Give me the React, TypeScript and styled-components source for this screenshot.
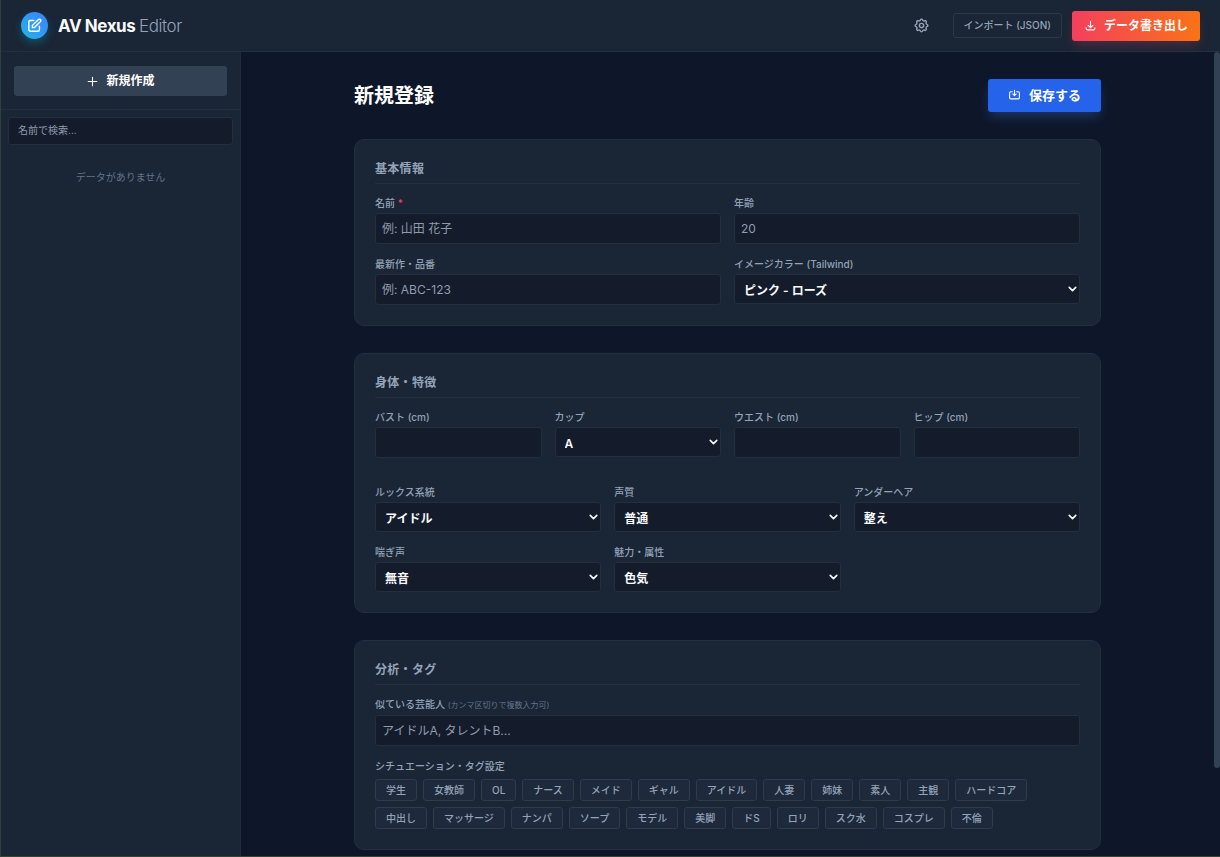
import React from "react";
import styled, { createGlobalStyle, css } from "styled-components";
import { HiOutlineCog } from "react-icons/hi";

const GlobalStyle = createGlobalStyle`
  *, *::before, *::after { box-sizing: border-box; }
  body {
    margin: 0;
    background: #0e172a;
    color: #e2e8f0;
    font-family: Inter, "Noto Sans CJK JP", sans-serif;
    font-size: 13px;
  }
  button, input, select { font: inherit; color: inherit; }
`;

const Shell = styled.div`
  display: flex;
  flex-direction: column;
  height: 100vh;
  overflow: hidden;
  border-left: 1px solid #2e4040;
  border-bottom: 1px solid #37452f;
`;

const Header = styled.header`
  display: flex;
  align-items: center;
  justify-content: space-between;
  flex: none;
  height: 52px;
  padding: 0 20px;
  background: #1a2535;
  border-bottom: 1px solid #222f3f;
`;

const Brand = styled.div`
  display: flex;
  align-items: center;
  gap: 10px;
`;

const Logo = styled.span`
  display: grid;
  place-items: center;
  width: 27px;
  height: 27px;
  border-radius: 50%;
  background: linear-gradient(45deg, #22b3ee, #3b82f6);
  box-shadow: 0 4px 10px rgba(6, 182, 212, 0.3);
  color: #fff;
`;

const BrandName = styled.h1`
  margin: 0;
  font-size: 17px;
  line-height: 24px;
  font-weight: 700;
  letter-spacing: -0.025em;
  color: #f8fafc;
  span { font-weight: 300; color: #94a3b8; }
`;

const Actions = styled.div`
  display: flex;
  align-items: center;
  gap: 10px;
`;

const IconButton = styled.button`
  display: grid;
  place-items: center;
  width: 30px;
  height: 30px;
  margin-right: 6px;
  padding: 0;
  border: 0;
  background: none;
  color: #94a3b8;
`;

const OutlineButton = styled.button`
  height: 25px;
  padding: 0 10px 2px;
  border: 1px solid #2b384a;
  border-radius: 3px;
  background: none;
  color: #94a3b8;
  font-size: 10px;
  line-height: 14px;
  font-weight: 500;
`;

const SolidButton = styled.button<{ $tone: "export" | "save" | "new" }>`
  display: flex;
  align-items: center;
  justify-content: center;
  gap: 7px;
  border: 0;
  border-radius: 3px;
  color: #fff;
  line-height: 16px;
  font-weight: 700;
  ${({ $tone }) =>
    $tone === "export"
      ? css`
          height: 30px;
          padding: 0 12px;
          font-size: 12px;
          background: linear-gradient(90deg, #f43f5e, #f97316);
          box-shadow: 0 6px 12px -2px rgba(244, 63, 94, 0.25);
        `
      : $tone === "save"
      ? css`
          height: 33px;
          padding: 0 20px 2px;
          gap: 8px;
          font-size: 13px;
          background: #2563eb;
          box-shadow: 0 6px 12px -2px rgba(59, 130, 246, 0.3);
        `
      : css`
          width: 100%;
          height: 30px;
          font-size: 12px;
          background: #334155;
        `}
`;

const Body = styled.div`
  display: flex;
  flex: 1;
  min-height: 0;
`;

const Sidebar = styled.aside`
  flex: none;
  width: 240px;
  background: #1a2535;
  border-right: 1px solid #1f2c3c;
`;

const SidebarTop = styled.div`
  padding: 14px 13px 13px;
  border-bottom: 1px solid #222f3f;
`;

const SidebarSearch = styled.div`
  padding: 7px;
`;

const Empty = styled.p`
  margin: 0;
  padding: 17px 0;
  text-align: center;
  font-size: 10px;
  line-height: 16px;
  color: #64748b;
`;

const Main = styled.main`
  flex: 1;
  min-width: 0;
  overflow-y: auto;
  padding: 27px;
  scrollbar-width: none;
`;

const ScrollRail = styled.div`
  flex: none;
  width: 6px;
  &::before {
    content: "";
    display: block;
    height: 89%;
    border-radius: 3px;
    background: #334155;
  }
`;

const Form = styled.form`
  max-width: 747px;
  margin: 0 auto;
  padding-bottom: 28px;
  display: flex;
  flex-direction: column;
  gap: 27px;
`;

const TitleRow = styled.div`
  display: flex;
  align-items: center;
  justify-content: space-between;
`;

const Title = styled.h2`
  margin: 0;
  font-size: 20px;
  line-height: 28px;
  font-weight: 700;
  color: #fff;
`;

const Card = styled.section`
  padding: 20px;
  border: 1px solid #222f3f;
  border-radius: 10px;
  background: #1a2535;
`;

const CardTitle = styled.h3`
  margin: 0 0 12px;
  padding-bottom: 6px;
  border-bottom: 1px solid #222f3f;
  font-size: 12px;
  line-height: 17px;
  font-weight: 700;
  letter-spacing: 0.025em;
  color: #94a3b8;
`;

const Grid = styled.div<{ $cols: number; $spaced?: boolean }>`
  display: grid;
  grid-template-columns: repeat(${({ $cols }) => $cols}, minmax(0, 1fr));
  gap: 13px;
  margin-top: ${({ $spaced }) => ($spaced ? 27 : 0)}px;
`;

const Block = styled.div`
  & + & { margin-top: 13px; }
`;

const labelText = css`
  display: block;
  margin-bottom: 3px;
  font-size: 10px;
  line-height: 14px;
  font-weight: 500;
  color: #94a3b8;
`;

const Label = styled.label`${labelText}`;
const GroupLabel = styled.div`
  ${labelText}
  margin-bottom: 6px;
`;
const Required = styled.span`color: #f43f5e;`;
const Hint = styled.span`
  font-size: 8px;
  font-weight: 400;
  color: #64748b;
`;

const control = css`
  display: block;
  width: 100%;
  border: 1px solid #222f3f;
  border-radius: 3px;
  background: #141c2c;
`;

const Input = styled.input<{ $small?: boolean }>`
  ${control}
  height: ${({ $small }) => ($small ? 28 : 31)}px;
  padding: ${({ $small }) => ($small ? "0 9px 2px" : "0 6px")};
  font-size: ${({ $small }) => ($small ? 10 : 12)}px;
  &::placeholder { color: #909bac; opacity: 1; }
`;

const SelectBox = styled.div`
  position: relative;
  color: #f8fafc;
  svg {
    position: absolute;
    top: 50%;
    right: 1px;
    transform: translateY(-50%);
    pointer-events: none;
  }
`;

const Select = styled.select`
  ${control}
  appearance: none;
  height: 30px;
  padding: 3px 20px 0 9px;
  font-size: 12px;
  font-weight: 600;
`;

const Tags = styled.div`
  display: flex;
  flex-wrap: wrap;
  gap: 6px;
`;

const Tag = styled.button`
  height: 22px;
  padding: 0 10px 1px;
  border: 1px solid #2f3c4e;
  border-radius: 3px;
  background: #1e293b;
  color: #94a3b8;
  font-size: 10px;
  line-height: 14px;
  font-weight: 500;
`;

const ICONS = {
  edit: "M11 5H6a2 2 0 00-2 2v11a2 2 0 002 2h11a2 2 0 002-2v-5m-1.414-9.414a2 2 0 112.828 2.828L11.828 15H9v-2.828l8.586-8.586z",
  download: "M4 16v1a3 3 0 003 3h10a3 3 0 003-3v-1m-4-4l-4 4m0 0l-4-4m4 4V4",
  save: "M8 7H5a2 2 0 00-2 2v9a2 2 0 002 2h14a2 2 0 002-2V9a2 2 0 00-2-2h-3m-1 4l-3 3m0 0l-3-3m3 3V4",
  plus: "M12 4v16m8-8H4",
  chevron: "M6 9l6 6 6-6",
};

const Icon = ({ name, size = 13, weight = 2 }: { name: keyof typeof ICONS; size?: number; weight?: number }) => (
  <svg
    width={size}
    height={size}
    viewBox="0 0 24 24"
    fill="none"
    stroke="currentColor"
    strokeWidth={weight}
    strokeLinecap="round"
    strokeLinejoin="round"
    aria-hidden="true"
  >
    <path d={ICONS[name]} />
  </svg>
);

const SITUATIONS = [
  "学生", "女教師", "OL", "ナース", "メイド", "ギャル", "アイドル", "人妻", "姉妹", "素人", "主観", "ハードコア",
  "中出し", "マッサージ", "ナンパ", "ソープ", "モデル", "美脚", "ドS", "ロリ", "スク水", "コスプレ", "不倫",
];

type TextFieldProps = { id: string; label: string; placeholder?: string; required?: boolean };

const TextField = ({ id, label, placeholder, required }: TextFieldProps) => (
  <div>
    <Label htmlFor={id}>
      {label}
      {required && <Required> *</Required>}
    </Label>
    <Input id={id} type="text" placeholder={placeholder} />
  </div>
);

const SelectField = ({ id, label, value }: { id: string; label: string; value: string }) => (
  <div>
    <Label htmlFor={id}>{label}</Label>
    <SelectBox>
      <Select id={id} defaultValue={value}>
        <option>{value}</option>
      </Select>
      <Icon name="chevron" weight={3} />
    </SelectBox>
  </div>
);

export default function App() {
  return (
    <Shell>
      <GlobalStyle />
      <Header>
        <Brand>
          <Logo><Icon name="edit" size={17} /></Logo>
          <BrandName>AV Nexus <span>Editor</span></BrandName>
        </Brand>
        <Actions>
          <IconButton type="button" aria-label="設定"><HiOutlineCog size={17} /></IconButton>
          <OutlineButton type="button">インポート (JSON)</OutlineButton>
          <SolidButton type="button" $tone="export"><Icon name="download" />データ書き出し</SolidButton>
        </Actions>
      </Header>
      <Body>
        <Sidebar>
          <SidebarTop>
            <SolidButton type="button" $tone="new"><Icon name="plus" />新規作成</SolidButton>
          </SidebarTop>
          <SidebarSearch>
            <Input $small type="text" placeholder="名前で検索..." aria-label="名前で検索" />
          </SidebarSearch>
          <Empty>データがありません</Empty>
        </Sidebar>
        <Main>
          <Form onSubmit={(e) => e.preventDefault()}>
            <TitleRow>
              <Title>新規登録</Title>
              <SolidButton type="submit" $tone="save"><Icon name="save" />保存する</SolidButton>
            </TitleRow>
            <Card>
              <CardTitle>基本情報</CardTitle>
              <Grid $cols={2}>
                <TextField id="name" label="名前" placeholder="例: 山田 花子" required />
                <TextField id="age" label="年齢" placeholder="20" />
                <TextField id="latest" label="最新作・品番" placeholder="例: ABC-123" />
                <SelectField id="color" label="イメージカラー (Tailwind)" value="ピンク - ローズ" />
              </Grid>
            </Card>
            <Card>
              <CardTitle>身体・特徴</CardTitle>
              <Grid $cols={4}>
                <TextField id="bust" label="バスト (cm)" />
                <SelectField id="cup" label="カップ" value="A" />
                <TextField id="waist" label="ウエスト (cm)" />
                <TextField id="hip" label="ヒップ (cm)" />
              </Grid>
              <Grid $cols={3} $spaced>
                <SelectField id="looks" label="ルックス系統" value="アイドル" />
                <SelectField id="voice" label="声質" value="普通" />
                <SelectField id="hair" label="アンダーヘア" value="整え" />
                <SelectField id="moan" label="喘ぎ声" value="無音" />
                <SelectField id="charm" label="魅力・属性" value="色気" />
              </Grid>
            </Card>
            <Card>
              <CardTitle>分析・タグ</CardTitle>
              <Block>
                <Label htmlFor="similar">似ている芸能人 <Hint>(カンマ区切りで複数入力可)</Hint></Label>
                <Input id="similar" type="text" placeholder="アイドルA, タレントB..." />
              </Block>
              <Block>
                <GroupLabel id="tags">シチュエーション・タグ設定</GroupLabel>
                <Tags role="group" aria-labelledby="tags">
                  {SITUATIONS.map((t) => <Tag key={t} type="button">{t}</Tag>)}
                </Tags>
              </Block>
            </Card>
          </Form>
        </Main>
        <ScrollRail aria-hidden="true" />
      </Body>
    </Shell>
  );
}
